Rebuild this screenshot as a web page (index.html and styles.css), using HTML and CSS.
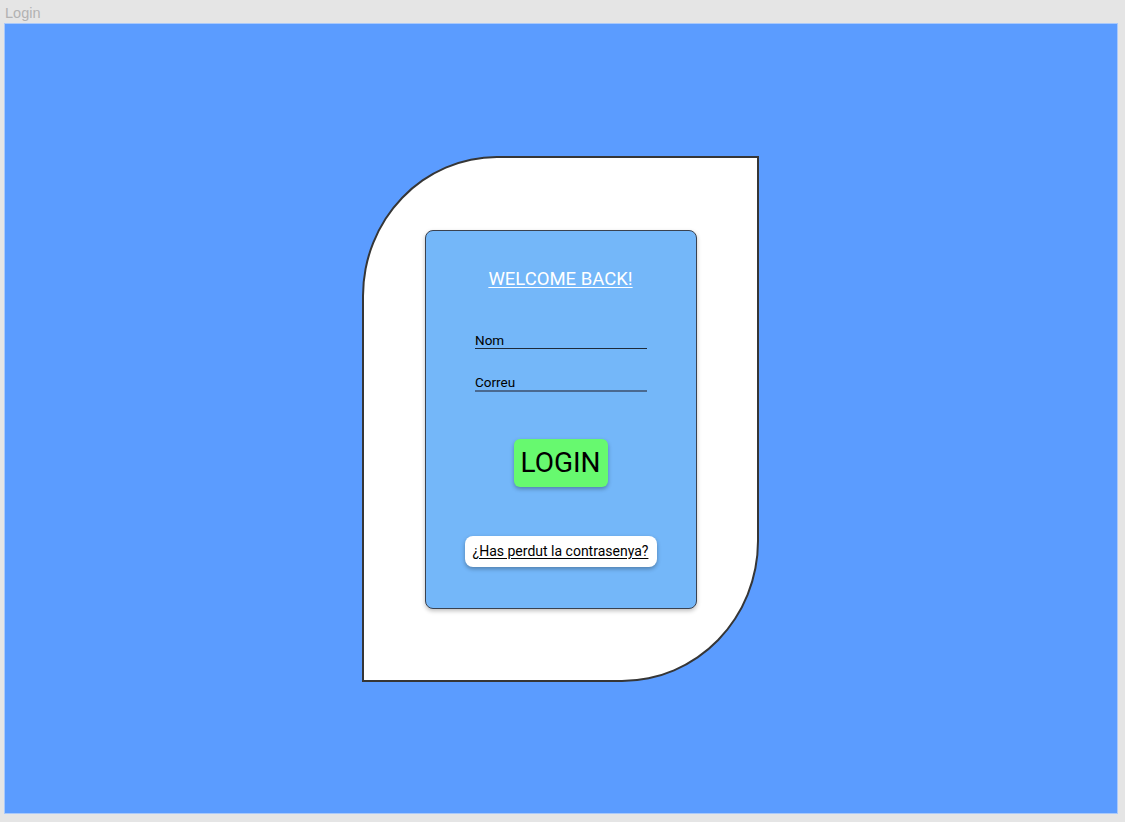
FILE: index.html
```html
<!DOCTYPE html>
<html lang="ca">
<head>
<meta charset="utf-8">
<title>Login</title>
<link rel="stylesheet" href="styles.css">
</head>
<body>
<div class="label">Login</div>
<main class="frame">
  <div class="leaf">
    <section class="card">
      <h1 class="title">WELCOME BACK!</h1>
      <div class="field field-nom">Nom</div>
      <div class="field field-correu">Correu</div>
      <button class="login">LOGIN</button>
      <a class="forgot" href="#">¿Has perdut la contrasenya?</a>
    </section>
  </div>
</main>
</body>
</html>
```

FILE: styles.css
```css
* { box-sizing: border-box; }
html, body { margin: 0; padding: 0; }
body {
  width: 1125px;
  height: 822px;
  background: #e5e5e5;
  font-family: Roboto, "Liberation Sans", sans-serif;
  overflow: hidden;
  padding: 0 0 0 4px;
}
.label {
  height: 23px;
  padding-left: 1px;
  padding-top: 5px;
  font-family: "Liberation Sans", Arial, sans-serif;
  font-size: 14.5px;
  line-height: 16px;
  color: #b2b2b2;
}
.frame {
  width: 1114px;
  height: 791px;
  background: #5b9cff;
  border: 1px solid #a9c9fb;
  display: flex;
  align-items: center;
  justify-content: center;
  padding-top: 1px;
  padding-right: 1px;
}
.leaf {
  width: 397px;
  height: 526px;
  background: #ffffff;
  border: 2px solid #363636;
  border-top-left-radius: 135px 140px;
  border-bottom-right-radius: 137px 141px;
  display: flex;
  align-items: center;
  justify-content: center;
}
.card {
  width: 272px;
  height: 379px;
  background: #74b7f9;
  border: 1px solid #3a4250;
  border-radius: 8px;
  box-shadow: 0 2px 4px rgba(0,0,0,0.25);
  display: flex;
  flex-direction: column;
  align-items: center;
  padding-top: 37px;
}
.title {
  margin: 0;
  font-size: 18.5px;
  line-height: 22px;
  font-weight: 400;
  color: #ffffff;
  text-decoration: underline;
  text-underline-offset: 2px;
  text-decoration-thickness: 1px;
}
.field {
  width: 172px;
  margin-left: 1px;
  font-size: 13.5px;
  line-height: 15px;
  color: #000;
  padding-top: 1px;
}
.field-nom {
  margin-top: 42px;
  border-bottom: 1px solid #1d2a3a;
}
.field-correu {
  margin-top: 25px;
  border-bottom: 2px solid #4a6990;
  height: 18px;
}
.login {
  margin-top: 47px;
  width: 94px;
  height: 48px;
  background: #67f96f;
  border: none;
  border-radius: 6px;
  box-shadow: 0 2px 4px rgba(0,0,0,0.3);
  font-family: Roboto, "Liberation Sans", sans-serif;
  font-size: 28px;
  line-height: 48px;
  color: #000;
  padding: 0;
}
.forgot {
  margin-top: 49px;
  width: 192px;
  height: 31px;
  background: #ffffff;
  border-radius: 8px;
  box-shadow: 0 2px 4px rgba(0,0,0,0.3);
  font-size: 14px;
  line-height: 31px;
  color: #000;
  text-align: center;
  text-decoration: underline;
  text-underline-offset: 2px;
}
```
